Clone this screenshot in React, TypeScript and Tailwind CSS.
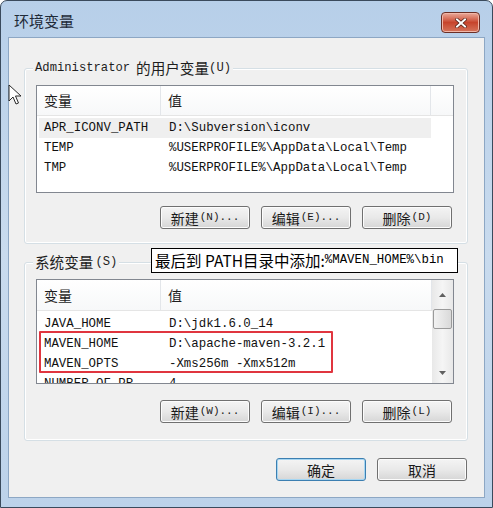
import React from 'react';

const MONO = "font-['Liberation_Mono','Noto_Sans_CJK_SC',monospace]";
const CJK = "font-['Noto_Sans_CJK_SC','Liberation_Sans',sans-serif]";

type Row = { name: string; value: string; selected?: boolean };

const userRows: Row[] = [
  { name: 'APR_ICONV_PATH', value: 'D:\\Subversion\\iconv', selected: true },
  { name: 'TEMP', value: '%USERPROFILE%\\AppData\\Local\\Temp' },
  { name: 'TMP', value: '%USERPROFILE%\\AppData\\Local\\Temp' },
];

const systemRows: Row[] = [
  { name: 'JAVA_HOME', value: 'D:\\jdk1.6.0_14' },
  { name: 'MAVEN_HOME', value: 'D:\\apache-maven-3.2.1' },
  { name: 'MAVEN_OPTS', value: '-Xms256m -Xmx512m' },
  { name: 'NUMBER_OF_PR', value: '4' },
];

const WinButton: React.FC<{ label: string; hotkey?: string; dots?: boolean; isDefault?: boolean }> = ({
  label,
  hotkey,
  dots,
  isDefault,
}) => (
  <button
    className={`w-[90px] h-[23px] rounded-[3px] border flex items-center justify-center text-[#1a1a1a] bg-gradient-to-b from-[#f4f4f4] via-[#e9e9e9] to-[#d6d6d6] ${
      isDefault
        ? 'border-[#3c7fb1] shadow-[inset_0_0_0_1px_#a6d6f2]'
        : 'border-[#707070] shadow-[inset_0_0_0_1px_#fcfcfc]'
    }`}
  >
    <span className={`${CJK} text-[14px] leading-none`}>{label}</span>
    {hotkey && (
      <span className={`${MONO} text-[11px] leading-none ml-[1px]`}>
        ({hotkey}){dots ? '...' : ''}
      </span>
    )}
  </button>
);

const VarList: React.FC<{ rows: Row[]; scroll?: boolean; headerH: string; height: string; rowsMt: string }> = ({
  rows,
  scroll,
  headerH,
  height,
  rowsMt,
}) => (
  <div className={`relative w-[418px] ${height} border border-[#828790] bg-white flex overflow-hidden`}>
    <div className="flex-1 flex flex-col">
      <div className={`flex shrink-0 ${headerH} border-b border-[#e5e5e5] bg-gradient-to-b from-white to-[#f7f8f9]`}>
        <div className={`${CJK} w-[124px] pl-[7px] flex items-center text-[14px] text-[#1e1e1e] border-r border-[#e3e6ea]`}>
          变量
        </div>
        <div className={`${CJK} flex-1 pl-[7px] flex items-center text-[14px] text-[#1e1e1e] border-r border-[#e3e6ea]`}>
          值
        </div>
        {!scroll && <div className="w-[22px]" />}
      </div>
      <div className={`flex flex-col shrink-0 ${rowsMt}`}>
        {rows.map((r) => (
          <div
            key={r.name}
            className={`flex shrink-0 h-[20px] items-center ${MONO} text-[12.4px] text-[#111] ${
              r.selected ? 'bg-[#efefef] mx-[2px] mr-[22px]' : 'mx-[2px]'
            }`}
          >
            <span className="w-[123px] pl-[5px] whitespace-nowrap">{r.name}</span>
            <span className="pl-[7px] whitespace-nowrap">{r.value}</span>
          </div>
        ))}
      </div>
    </div>
    {scroll && (
      <div className="w-[21px] bg-gradient-to-r from-[#e8e8e8] via-[#f5f5f5] to-[#e8e8e8] flex flex-col items-center">
        <div className="h-[29px] w-full flex items-center justify-center">
          <svg width="7" height="4" viewBox="0 0 7 4">
            <path d="M0 4 L3.5 0 L7 4 Z" fill="#606060" />
          </svg>
        </div>
        <div className="w-[19px] h-[20px] rounded-[2px] border border-[#9a9a9a] bg-gradient-to-r from-[#f2f2f2] via-[#e6e6e6] to-[#d9d9d9]" />
        <div className="flex-1" />
        <div className="h-[20px] w-full flex items-center justify-center">
          <svg width="7" height="4" viewBox="0 0 7 4">
            <path d="M0 0 L3.5 4 L7 0 Z" fill="#606060" />
          </svg>
        </div>
      </div>
    )}
  </div>
);

const Cursor = () => (
  <svg width="15" height="22" viewBox="0 0 15 22" className="absolute left-[8px] top-[84px]">
    <path d="M1 1 L1 17 L5 13 L8 20 L10.5 19 L7.5 12 L13 12 Z" fill="white" stroke="#2a2a2a" strokeWidth="1" strokeLinejoin="round" />
  </svg>
);

export default function App() {
  return (
    <div className="relative w-[493px] h-[508px] bg-white">
      <div className="w-[493px] h-[508px] rounded-t-[7px] border border-[#3a4a5c] bg-gradient-to-b from-[#b7cfe9] via-[#c9dbee] to-[#bcd2ea] flex flex-col">
        {/* title bar */}
        <div className="h-[36px] flex items-start justify-between shrink-0">
          <div className={`${CJK} text-[15px] text-[#1e2a38] ml-[13px] mt-[12px] leading-none`}>环境变量</div>
          <button className="mt-[11px] mr-[12px] w-[39px] h-[21px] rounded-[4px] border border-[#6b2f26] bg-gradient-to-b from-[#e9a99a] via-[#c7442c] to-[#d5735a] flex items-center justify-center shadow-[inset_0_0_0_1px_#f1b7a8]">
            <svg width="12" height="10" viewBox="0 0 12 10">
              <path d="M2 1.5 L10 8.5 M10 1.5 L2 8.5" stroke="#4a1a10" strokeWidth="3.4" strokeLinecap="square" />
              <path d="M2 1.5 L10 8.5 M10 1.5 L2 8.5" stroke="white" strokeWidth="2" strokeLinecap="square" />
            </svg>
          </button>
        </div>
        {/* client */}
        <div className="mx-[7px] h-[461px] border border-[#8da7c4] bg-[#f0f0f0] flex flex-col items-start">
          <div className="ml-[15px] mt-[30px] w-[444px] h-[176px] border border-[#d5dfe5] rounded-[3px] shadow-[inset_0_0_0_1px_#fff] flex flex-col items-start">
            <div className="-mt-[9px] ml-[8px] px-[2px] bg-[#f0f0f0] flex items-center h-[16px]">
              <span className={`${MONO} text-[12.2px] text-[#1e1e1e]`}>Administrator</span>
              <span className={`${CJK} text-[14.6px] text-[#1e1e1e] ml-[6px]`}>的用户变量</span>
              <span className={`${MONO} text-[12.2px] text-[#1e1e1e]`}>(U)</span>
            </div>
            <div className="ml-[11px] mt-[9px]">
              <VarList rows={userRows} headerH="h-[30px]" height="h-[108px]" rowsMt="mt-[2px]" />
            </div>
            <div className="ml-[135px] mt-[13px] flex gap-[11px]">
              <WinButton label="新建" hotkey="N" dots />
              <WinButton label="编辑" hotkey="E" dots />
              <WinButton label="删除" hotkey="D" />
            </div>
          </div>

          <div className="ml-[15px] mt-[18px] w-[444px] h-[179px] border border-[#d5dfe5] rounded-[3px] shadow-[inset_0_0_0_1px_#fff] flex flex-col items-start">
            <div className="-mt-[9px] ml-[8px] px-[2px] bg-[#f0f0f0] flex items-center h-[16px]">
              <span className={`${CJK} text-[14.6px] text-[#1e1e1e]`}>系统变量</span>
              <span className={`${MONO} text-[12.2px] text-[#1e1e1e] ml-[2px]`}>(S)</span>
            </div>
            <div className="ml-[11px] mt-[9px] relative">
              <VarList rows={systemRows} scroll headerH="h-[31px]" height="h-[105px]" rowsMt="mt-[3px]" />
              <div className="absolute left-[3px] top-[52px] w-[294px] h-[42px] border-2 border-[#e0353f] rounded-[1px]" />
            </div>
            <div className="ml-[135px] mt-[16px] flex gap-[11px]">
              <WinButton label="新建" hotkey="W" dots />
              <WinButton label="编辑" hotkey="I" dots />
              <WinButton label="删除" hotkey="L" />
            </div>
          </div>

          <div className="ml-[267px] mt-[17px] flex gap-[11px]">
            <WinButton label="确定" isDefault />
            <WinButton label="取消" />
          </div>
        </div>
      </div>

      {/* annotation tooltip */}
      <div className="absolute left-[151px] top-[248px] w-[307px] h-[25px] border border-black bg-white flex items-center pl-[3px]">
        <span className={`${CJK} text-[15.5px] text-black whitespace-nowrap`}>最后到 PATH目录中添加:</span>
        <span className={`${MONO} text-[12.4px] text-black whitespace-nowrap`}>%MAVEN_HOME%\bin</span>
      </div>

      <Cursor />
    </div>
  );
}
